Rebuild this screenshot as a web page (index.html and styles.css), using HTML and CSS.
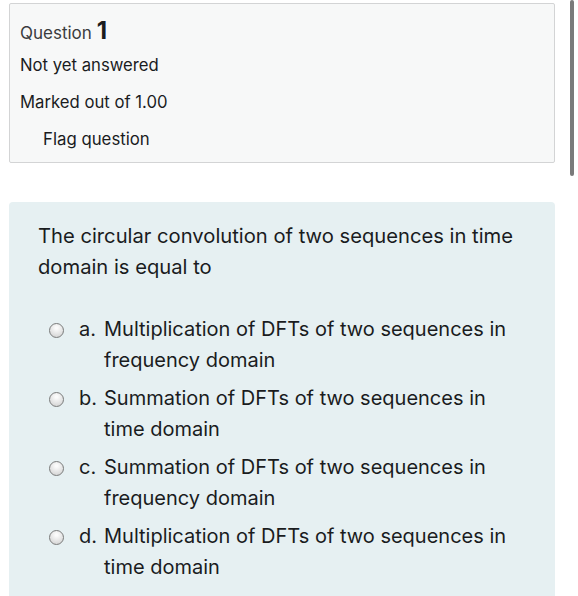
FILE: index.html
```html
<!DOCTYPE html>
<html>
<head>
<meta charset="utf-8">
<link rel="stylesheet" href="styles.css">
</head>
<body>
<div class="page">
  <div class="info">
    <div class="qno">Question <span class="num">1</span></div>
    <div class="state">Not yet answered</div>
    <div class="grade">Marked out of 1.00</div>
    <div class="flag">Flag question</div>
  </div>
  <div class="content">
    <div class="qtext">The circular convolution of two sequences in time domain is equal to</div>
    <div class="answers">
      <div class="opt"><span class="radio"></span><span class="lbl">a.</span><span class="txt">Multiplication of DFTs of two sequences in frequency domain</span></div>
      <div class="opt"><span class="radio"></span><span class="lbl">b.</span><span class="txt">Summation of DFTs of two sequences in time domain</span></div>
      <div class="opt"><span class="radio"></span><span class="lbl">c.</span><span class="txt">Summation of DFTs of two sequences in frequency domain</span></div>
      <div class="opt"><span class="radio"></span><span class="lbl">d.</span><span class="txt">Multiplication of DFTs of two sequences in time domain</span></div>
    </div>
  </div>
</div>
<div class="scrollbar"></div>
</body>
</html>
```
FILE: styles.css
```css
html, body { margin: 0; padding: 0; background: #fff; }
body { font-family: Inter, "Noto Sans", sans-serif; color: #1a1c1e; width: 578px; height: 596px; overflow: hidden; position: relative; }
.page { padding: 3px 23px 0 9px; }
.info { background: #f7f8f8; border: 1px solid #d3d4d5; border-radius: 2px; padding: 11px 10px 4px 10px; }
.qno { font-size: 17px; color: #3a3c3e; height: 32px; line-height: 32px; }
.qno .num { font-size: 24px; font-weight: 700; color: #1a1c1e; }
.state, .grade { font-size: 16.7px; line-height: 37px; }
.flag { font-size: 16.8px; line-height: 37px; padding-left: 23px; }
.content { margin-top: 39px; background: #e6f0f2; border-radius: 4px; padding: 18px 30px 40px 29px; }
.qtext { font-size: 20.2px; line-height: 31px; }
.answers { margin-top: 32px; padding-left: 11px; }
.opt { display: flex; font-size: 20px; line-height: 31px; margin-bottom: 7px; }
.radio { flex: none; width: 13px; height: 13px; border-radius: 50%; border: 1px solid #7a7b7b; background: radial-gradient(circle at 50% 30%, #fbfbfb 10%, #d2d2d2 90%); margin-top: 9px; margin-right: 15px; }
.lbl { flex: none; width: 25px; }
.txt { flex: 1; }
.scrollbar { position: absolute; left: 570px; top: 0; width: 4px; height: 176px; background: #7a7a7a; border-radius: 2px; }
```
